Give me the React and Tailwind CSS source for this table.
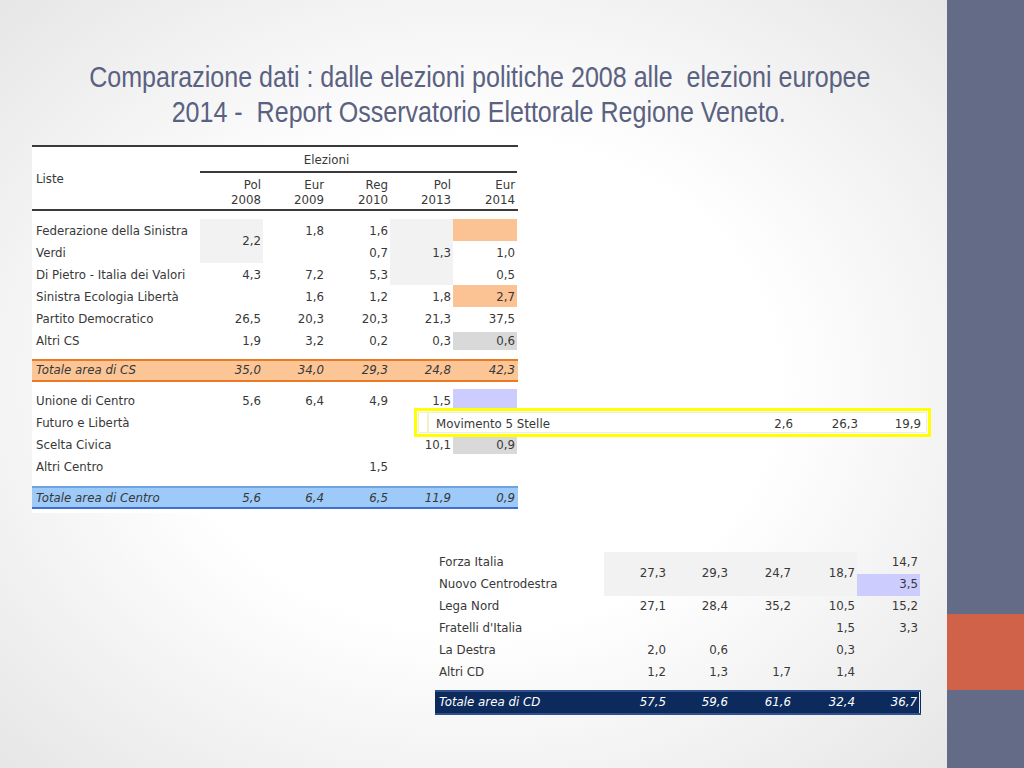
import React from "react";

const FONT = { fontFamily: '"DejaVu Sans", Verdana, sans-serif' };

function N({ children, className = "" }) {
  return (
    <div className={"flex items-center justify-end pr-[2px] " + className}>
      {children}
    </div>
  );
}

function L({ children, className = "" }) {
  return <div className={"flex items-center pl-[4px] whitespace-nowrap " + className}>{children}</div>;
}

function LeftTable() {
  const grid = "grid grid-cols-[168px_63px_63px_64px_63px_64px]";
  const s = "pt-[4px]";
  return (
    <div className="ml-[32px] w-[486px] bg-white pb-[4px] text-[11.8px] text-[#383838]" style={FONT}>
      {/* header */}
      <div className="border-t-2 border-[#3a3a3a]">
        <div className={grid + " grid-rows-[26px_36px]"}>
          <div className="row-span-2 flex items-center pl-[4px] pt-[4px]">Liste</div>
          <div className="col-span-5 border-b-2 border-[#3a3a3a]">
            <div className="flex h-full w-[253px] items-center justify-center pt-[4px]">Elezioni</div>
          </div>
          <div className="flex flex-col items-end justify-center pr-[2px] pt-[4px] leading-[15px]">
            <span>Pol</span>
            <span>2008</span>
          </div>
          <div className="flex flex-col items-end justify-center pr-[2px] pt-[4px] leading-[15px]">
            <span>Eur</span>
            <span>2009</span>
          </div>
          <div className="flex flex-col items-end justify-center pr-[2px] pt-[4px] leading-[15px]">
            <span>Reg</span>
            <span>2010</span>
          </div>
          <div className="flex flex-col items-end justify-center pr-[2px] pt-[4px] leading-[15px]">
            <span>Pol</span>
            <span>2013</span>
          </div>
          <div className="flex flex-col items-end justify-center pr-[2px] pt-[4px] leading-[15px]">
            <span>Eur</span>
            <span>2014</span>
          </div>
        </div>
      </div>
      <div className="border-t-2 border-[#3a3a3a]" />

      {/* CS body */}
      <div className={grid + " mt-[8px] auto-rows-[22px]"}>
        <L className={s}>Federazione della Sinistra</L>
        <N className="row-span-2 bg-[#f2f2f2] pt-[2px]">2,2</N>
        <N className={s}>1,8</N>
        <N className={s}>1,6</N>
        <N className="bg-[#f2f2f2]"></N>
        <N className="bg-[#fbc294]"></N>

        <L className={s}>Verdi</L>
        <N></N>
        <N className={s}>0,7</N>
        <N className={"bg-[#f2f2f2] " + s}>1,3</N>
        <N className={s}>1,0</N>

        <L className={s}>Di Pietro - Italia dei Valori</L>
        <N className={s}>4,3</N>
        <N className={s}>7,2</N>
        <N className={s}>5,3</N>
        <N className="bg-[#f2f2f2]"></N>
        <N className={s}>0,5</N>

        <L className={s}>Sinistra Ecologia Libertà</L>
        <N></N>
        <N className={s}>1,6</N>
        <N className={s}>1,2</N>
        <N className={s}>1,8</N>
        <N className={"bg-[#fbc294] " + s}>2,7</N>

        <L className={s}>Partito Democratico</L>
        <N className={s}>26,5</N>
        <N className={s}>20,3</N>
        <N className={s}>20,3</N>
        <N className={s}>21,3</N>
        <N className={s}>37,5</N>

        <L className={s}>Altri CS</L>
        <N className={s}>1,9</N>
        <N className={s}>3,2</N>
        <N className={s}>0,2</N>
        <N className={s}>0,3</N>
        <N className="mt-[3px] mb-[1px] bg-[#d9d9d9] pt-[2px]">0,6</N>
      </div>

      {/* Totale CS */}
      <div className={grid + " mt-[8px] h-[23px] border-y-2 border-[#ea7a26] bg-[#fcc596] italic"}>
        <L>Totale area di CS</L>
        <N>35,0</N>
        <N>34,0</N>
        <N>29,3</N>
        <N>24,8</N>
        <N>42,3</N>
      </div>

      {/* Centro body */}
      <div className={grid + " mt-[7px] auto-rows-[22px]"}>
        <L className={s}>Unione di Centro</L>
        <N className={s}>5,6</N>
        <N className={s}>6,4</N>
        <N className={s}>4,9</N>
        <N className={s}>1,5</N>
        <N className="mb-[3px] bg-[#ccccff]"></N>

        <L className={s}>Futuro e Libertà</L>
        <N></N>
        <N></N>
        <N></N>
        <N></N>
        <N></N>

        <L className={s}>Scelta Civica</L>
        <N></N>
        <N></N>
        <N></N>
        <N className={s}>10,1</N>
        <N className="mt-[2px] mb-[1px] bg-[#d9d9d9] pt-[3px]">0,9</N>

        <L className={s}>Altri Centro</L>
        <N></N>
        <N></N>
        <N className={s}>1,5</N>
        <N></N>
        <N></N>
      </div>

      {/* Totale Centro */}
      <div className={grid + " mt-[9px] h-[23px] border-t-2 border-b-2 border-t-[#6fa3e0] border-b-[#3f6fd1] bg-[#9dcaf8] pt-[2px] italic"}>
        <L>Totale area di Centro</L>
        <N>5,6</N>
        <N>6,4</N>
        <N>6,5</N>
        <N>11,9</N>
        <N>0,9</N>
      </div>
    </div>
  );
}

function RightTable() {
  const grid = "grid grid-cols-[169px_64px_62px_63px_64px_63px]";
  return (
    <div className="ml-[435px] mt-[39px] w-[486px] text-[11.8px] text-[#383838]" style={FONT}>
      <div className={grid + " auto-rows-[22px]"}>
        <L className="pl-[3px]">Forza Italia</L>
        <N className="row-span-2 bg-[#f2f2f2]">27,3</N>
        <N className="row-span-2 bg-[#f2f2f2]">29,3</N>
        <N className="row-span-2 bg-[#f2f2f2]">24,7</N>
        <N className="row-span-2 bg-[#f2f2f2]">18,7</N>
        <N>14,7</N>

        <L className="pl-[3px]">Nuovo Centrodestra</L>
        <N className="bg-[#ccccff]">3,5</N>

        <L className="pl-[3px]">Lega Nord</L>
        <N>27,1</N>
        <N>28,4</N>
        <N>35,2</N>
        <N>10,5</N>
        <N>15,2</N>

        <L className="pl-[3px]">Fratelli d'Italia</L>
        <N></N>
        <N></N>
        <N></N>
        <N>1,5</N>
        <N>3,3</N>

        <L className="pl-[3px]">La Destra</L>
        <N>2,0</N>
        <N>0,6</N>
        <N></N>
        <N>0,3</N>
        <N></N>

        <L className="pl-[3px]">Altri CD</L>
        <N>1,2</N>
        <N>1,3</N>
        <N>1,7</N>
        <N>1,4</N>
        <N></N>
      </div>
      <div className={grid + " mt-[6px] h-[25px] border-y-2 border-[#2f4f8f] bg-[#0d2a5c] italic text-white"}>
        <L className="pl-[3px]">Totale area di CD</L>
        <N>57,5</N>
        <N>59,6</N>
        <N>61,6</N>
        <N>32,4</N>
        <N className="border-r border-[#dfe6f2]">36,7</N>
      </div>
    </div>
  );
}

function Movimento() {
  return (
    <div
      className="absolute left-[414px] top-[408px] h-[29px] w-[517px] border-[3px] border-[#ffff00] bg-white p-[1px] text-[11.8px] text-[#383838]"
      style={FONT}
    >
      <div className="flex h-full">
        <div className="w-[10px] border border-[#f2f2c8]" />
        <div className="flex flex-1 items-center border border-[#f2f2c8] pl-[7px] pr-[5px] pt-[5px]">
          <div className="flex-1 whitespace-nowrap">Movimento 5 Stelle</div>
          <div className="w-[65px] text-right">2,6</div>
          <div className="w-[65px] text-right">26,3</div>
          <div className="w-[63px] text-right">19,9</div>
        </div>
      </div>
    </div>
  );
}

export default function App() {
  return (
    <div className="flex h-[768px] w-[1024px] overflow-hidden">
      <div className="relative h-full w-[947px] bg-[radial-gradient(ellipse_at_center,#ffffff_45%,#e6e6e6_100%)]">
        <div
          className="pt-[59px] text-[30px] leading-[35px] text-[#5a6181]"
          style={{ fontFamily: '"Liberation Sans", Arial, sans-serif' }}
        >
          <div className="flex justify-center pl-[12px]">
            <div className="shrink-0 origin-center scale-x-[0.835] whitespace-nowrap">
              Comparazione dati : dalle elezioni politiche 2008 alle&nbsp; elezioni europee
            </div>
          </div>
          <div className="flex justify-center pl-[10px]">
            <div className="shrink-0 origin-center scale-x-[0.835] whitespace-nowrap">
              2014 -&nbsp; Report Osservatorio Elettorale Regione Veneto.
            </div>
          </div>
        </div>
        <div className="mt-[16px]">
          <LeftTable />
        </div>
        <RightTable />
        <Movimento />
      </div>
      <div className="flex h-full w-[77px] flex-col bg-[#646b86]">
        <div className="h-[614px]" />
        <div className="h-[76px] bg-[#d1624a]" />
      </div>
    </div>
  );
}
